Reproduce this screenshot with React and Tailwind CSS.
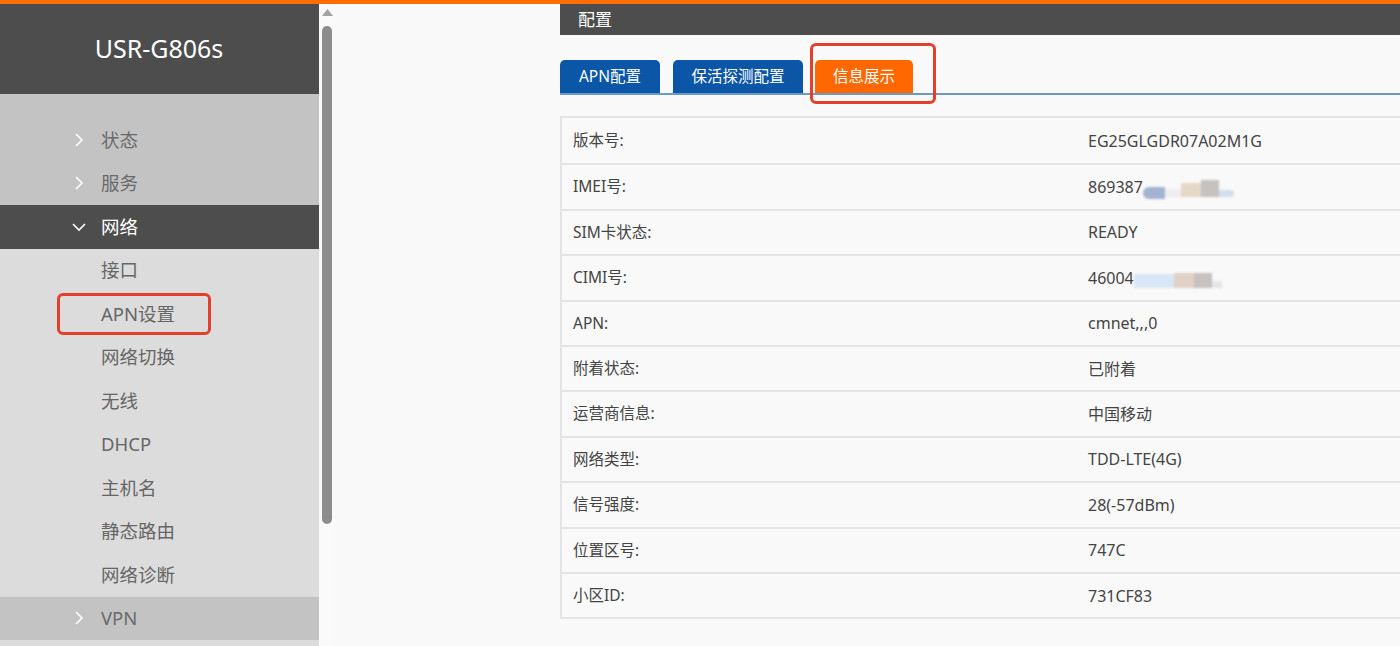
import React from 'react';

const font = { fontFamily: '"Noto Sans", "Noto Sans CJK SC", sans-serif' };

function Chevron({ open }) {
  return (
    <svg width="14" height="14" viewBox="0 0 14 14" className="shrink-0">
      {open ? (
        <path d="M1 4 L7 10 L13 4" fill="none" stroke="#ffffff" strokeWidth="1.6" />
      ) : (
        <path d="M4 1 L10 7 L4 13" fill="none" stroke="#ffffff" strokeWidth="1.6" />
      )}
    </svg>
  );
}

const subItems = ['接口', 'APN设置', '网络切换', '无线', 'DHCP', '主机名', '静态路由', '网络诊断'];

const rows = [
  ['版本号:', 'EG25GLGDR07A02M1G'],
  ['IMEI号:', 'imei'],
  ['SIM卡状态:', 'READY'],
  ['CIMI号:', 'cimi'],
  ['APN:', 'cmnet,,,0'],
  ['附着状态:', '已附着'],
  ['运营商信息:', '中国移动'],
  ['网络类型:', 'TDD-LTE(4G)'],
  ['信号强度:', '28(-57dBm)'],
  ['位置区号:', '747C'],
  ['小区ID:', '731CF83'],
];

function Masked({ prefix, kind }) {
  return (
    <span className="flex items-center">
      <span>{prefix}</span>
      {kind === 'imei' ? (
        <span className="flex items-end h-[20px] blur-[1px]">
          <span className="w-[22px] h-[12px] bg-[#a3b2d2] rounded-l-full mb-[-2px]" />
          <span className="w-[16px] h-[8px] bg-[#eeeeee]" />
          <span className="w-[20px] h-[14px] bg-[#e6d8c6]" />
          <span className="w-[18px] h-[17px] bg-[#c5c2bf]" />
          <span className="w-[15px] h-[7px] bg-[#d2dfee] rounded-r-full" />
        </span>
      ) : (
        <span className="flex items-end h-[20px] blur-[1px]">
          <span className="w-[40px] h-[14px] bg-[#d9e6f5]" />
          <span className="w-[20px] h-[15px] bg-[#e1d1c6]" />
          <span className="w-[18px] h-[15px] bg-[#c6c2c0]" />
          <span className="w-[10px] h-[7px] bg-[#e6e6e6]" />
        </span>
      )}
    </span>
  );
}

export default function App() {
  return (
    <div className="w-[1400px] h-[646px] overflow-hidden bg-[#f9f9f9] flex flex-col" style={font}>
      <div className="h-[4px] bg-[#ff6d00] shrink-0" />
      <div className="flex flex-1 min-h-0">
        {/* sidebar */}
        <aside className="w-[319px] shrink-0 flex flex-col bg-[#dcdcdc]">
          <div className="h-[90px] bg-[#4d4d4d] flex items-center justify-center">
            <span className="text-white text-[25px] pb-[1px] pr-[1px]">USR-G806s</span>
          </div>
          <div className="bg-[#c3c3c3] pt-[24px]">
            {['状态', '服务'].map((t) => (
              <div key={t} className="h-[43.5px] flex items-center pl-[72px] gap-[15px] text-[18.5px] text-[#6a6a6a]">
                <Chevron />
                <span>{t}</span>
              </div>
            ))}
          </div>
          <div className="h-[43.5px] bg-[#4d4d4d] flex items-center pl-[72px] gap-[15px] text-[18.5px] text-white">
            <Chevron open />
            <span>网络</span>
          </div>
          <div className="bg-[#dcdcdc]">
            {subItems.map((t) => (
              <div key={t} className="relative h-[43.5px] flex items-center pl-[101px] text-[18.5px] text-[#666]">
                <span>{t}</span>
                {t === 'APN设置' && (
                  <div className="absolute left-[57px] top-[1px] w-[154px] h-[42px] border-[3px] border-[#e2402b] rounded-[6px]" />
                )}
              </div>
            ))}
          </div>
          <div className="h-[43.5px] bg-[#c3c3c3] flex items-center pl-[72px] gap-[15px] text-[18.5px] text-[#6a6a6a]">
            <Chevron />
            <span>VPN</span>
          </div>
          <div className="flex-1 bg-[#dcdcdc]" />
        </aside>

        {/* scrollbar */}
        <div className="w-[16px] shrink-0 bg-[#fafafa] flex flex-col items-center pt-[5px]">
          <svg width="11" height="8" viewBox="0 0 11 8">
            <path d="M5.5 0 L11 7 L0 7 Z" fill="#a3a3a3" />
          </svg>
          <div className="mt-[9px] w-[10px] h-[498px] rounded-full bg-[#8d8d8d]" />
        </div>

        {/* main */}
        <main className="flex-1 pl-[225px] flex flex-col">
          <div className="h-[31px] bg-[#4d4d4d] flex items-center pl-[18px] text-white text-[17px]">配置</div>

          <div className="relative mt-[25px] flex items-end gap-[12px] border-b-2 border-[#6c9ac6] h-[35px]">
            <div className="w-[100px] h-[33px] rounded-t-[5px] bg-[#0b56a7] text-white text-[15.5px] flex items-center justify-center">APN配置</div>
            <div className="ml-[1px] w-[130px] h-[33px] rounded-t-[5px] bg-[#0b56a7] text-white text-[15.5px] flex items-center justify-center">保活探测配置</div>
            <div className="w-[98px] h-[33px] rounded-t-[5px] bg-[#ff6800] text-white text-[15.5px] flex items-center justify-center">信息展示</div>
            <div className="absolute left-[250px] top-[-17px] w-[126px] h-[61px] border-[3px] border-[#e2402b] rounded-[6px]" />
          </div>

          <div className="mt-[21px] border-2 border-r-0 border-[#e4e4e4]">
            {rows.map(([k, v], i) => (
              <div
                key={k}
                className={`h-[45.4px] flex items-center text-[#444] ${i > 0 ? 'border-t-2 border-[#e4e4e4]' : ''}`}
              >
                <div className="w-[526px] pl-[11px] text-[15.5px]">{k}</div>
                <div className="text-[16px]">
                  {v === 'imei' ? (
                    <Masked prefix="869387" kind="imei" />
                  ) : v === 'cimi' ? (
                    <Masked prefix="46004" kind="cimi" />
                  ) : (
                    v
                  )}
                </div>
              </div>
            ))}
          </div>
        </main>
      </div>
    </div>
  );
}
